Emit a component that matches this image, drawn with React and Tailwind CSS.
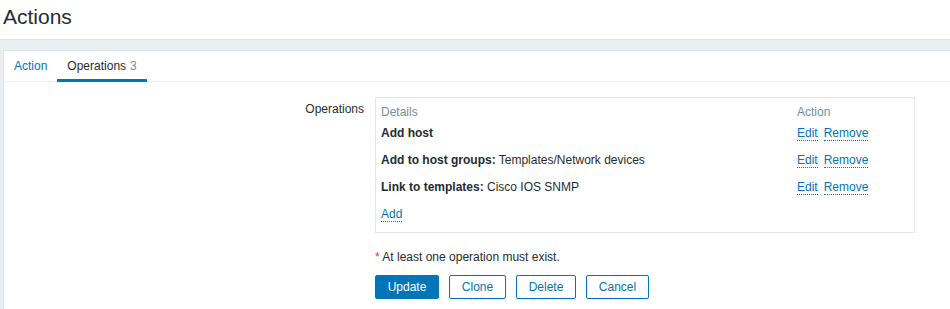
// App.jsx - Actions / Operations tab

import React, { useState } from 'react';

const operations = [
    { label: 'Add host', value: '' },
    { label: 'Add to host groups:', value: 'Templates/Network devices' },
    { label: 'Link to templates:', value: 'Cisco IOS SNMP' },
];

const DottedLink = ({ children, className = '' }) => (
    <a href="#" className={`text-[#0275b8] border-b border-dotted border-[#0275b8] ${className}`}>
        {children}
    </a>
);

const App = () => {
    const [activeTab, setActiveTab] = useState('operations');

    return (
        <div className="min-h-screen bg-[#ebeef0] font-['Liberation_Sans',Arial,sans-serif] text-[12px] leading-[14px] text-[#1f2c33]">
            {/* Page title */}
            <header className="h-[40px] bg-white border-b border-[#dfe4e7] pl-[3px] pt-[5px]">
                <h1 className="text-[21px] leading-[24px] font-normal">Actions</h1>
            </header>

            <div className="pt-[10px] pl-[3px]">
                <div className="bg-white border-l border-t border-[#dfe4e7] min-h-[270px]">
                    {/* Tabs */}
                    <ul className="flex h-[31px] border-b border-[#ebeef0]">
                        <li
                            onClick={() => setActiveTab('action')}
                            className={`flex items-center h-[31px] px-[10px] pt-[2px] border-b-[3px] cursor-pointer ${activeTab === 'action' ? 'border-[#0275b8] text-[#1f2c33]' : 'border-transparent text-[#0275b8]'}`}
                        >
                            Action
                        </li>
                        <li
                            onClick={() => setActiveTab('operations')}
                            className={`flex items-center h-[31px] px-[10px] pt-[2px] border-b-[3px] cursor-pointer ${activeTab === 'operations' ? 'border-[#0275b8] text-[#1f2c33]' : 'border-transparent text-[#0275b8]'}`}
                        >
                            Operations<span className="ml-[4px] text-[#768d99]">3</span>
                        </li>
                    </ul>

                    {/* Form */}
                    <div className="flex pt-[15px]">
                        <div className="w-[371px] pr-[11px] pt-[5px] text-right">Operations</div>
                        <div className="w-[540px]">
                            <div className="border border-[#e5e8eb] px-[5px] pt-[7px] pb-[11px]">
                                <div className="grid grid-cols-[1fr_112px] text-[#768d99]">
                                    <span>Details</span>
                                    <span>Action</span>
                                </div>
                                {operations.map((op, i) => (
                                    <div key={i} className={`grid grid-cols-[1fr_112px] ${i === 0 ? 'mt-[7px]' : 'mt-[13px]'}`}>
                                        <span>
                                            <span className="font-bold">{op.label}</span>
                                            {op.value && ` ${op.value}`}
                                        </span>
                                        <span>
                                            <DottedLink>Edit</DottedLink>
                                            <DottedLink className="ml-[6px]">Remove</DottedLink>
                                        </span>
                                    </div>
                                ))}
                                <div className="mt-[13px]">
                                    <DottedLink>Add</DottedLink>
                                </div>
                            </div>

                            <p className="mt-[17px]">
                                <span className="text-[#e33734]">*</span> At least one operation must exist.
                            </p>

                            <div className="flex gap-[10px] mt-[11px]">
                                <button className="w-[64px] h-[24px] flex items-center justify-center rounded-[2px] border border-[#0275b8] bg-[#0275b8] text-white">Update</button>
                                <button className="w-[57px] h-[24px] flex items-center justify-center rounded-[2px] border border-[#0275b8] bg-white text-[#0275b8]">Clone</button>
                                <button className="w-[60px] h-[24px] flex items-center justify-center rounded-[2px] border border-[#0275b8] bg-white text-[#0275b8]">Delete</button>
                                <button className="w-[63px] h-[24px] flex items-center justify-center rounded-[2px] border border-[#0275b8] bg-white text-[#0275b8]">Cancel</button>
                            </div>
                        </div>
                    </div>
                </div>
            </div>
        </div>
    );
};

export default App;
